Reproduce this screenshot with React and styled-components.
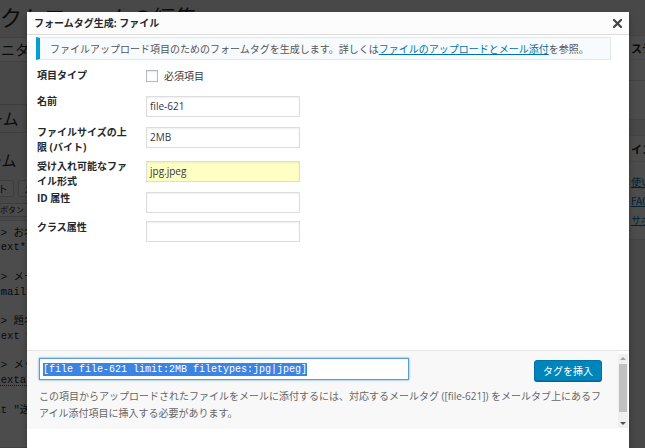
import React from "react";
import styled, { createGlobalStyle } from "styled-components";

const GlobalStyle = createGlobalStyle`
  html, body { margin: 0; padding: 0; background: #f1f1f1; }
  body { font-family: "Open Sans", "Noto Sans CJK JP", sans-serif; }
  * { box-sizing: border-box; }
`;

/* ---------- background admin page ---------- */
const Screen = styled.div`
  position: relative;
  width: 645px;
  height: 448px;
  overflow: hidden;
  background: #f1f1f1;
`;

const Admin = styled.div`
  display: flex;
  height: 100%;
  color: #23282d;
  font-family: "Noto Sans CJK JP", sans-serif;
`;

const MainCol = styled.div`
  flex: 1;
  min-width: 0;
  display: flex;
  flex-direction: column;
`;

const BgTitle = styled.h1`
  margin: 5px 0 0 -66px;
  font-size: 22px;
  line-height: 22px;
  font-weight: 400;
  white-space: nowrap;
`;

const TitleField = styled.div`
  margin: 10px 0 0 -20px;
  height: 25px;
  width: 560px;
  background: #fff;
  border: 1px solid #ddd;
  font-size: 14px;
  line-height: 23px;
  padding-left: 6px;
  white-space: nowrap;
`;

const TabRow = styled.div`
  margin-top: 43px;
  height: 28px;
  border-bottom: 1px solid #ccc;
  display: flex;
  align-items: flex-end;
`;

const Tab = styled.div`
  margin-left: ${(p) => p.$shift}px;
  height: 28px;
  padding: 0 7px 0 4px;
  border: 1px solid #ccc;
  border-bottom: none;
  background: ${(p) => (p.$active ? "#f1f1f1" : "#e4e4e4")};
  font-size: 16px;
  line-height: 26px;
  white-space: nowrap;
`;

const SectionHeading = styled.h2`
  margin: 18px 0 0 -43px;
  font-size: 15px;
  line-height: 18px;
  font-weight: 400;
  white-space: nowrap;
`;

const QuickRow = styled.div`
  margin-top: ${(p) => p.$mt}px;
  display: flex;
  gap: 4px;
  margin-left: ${(p) => p.$shift}px;
`;

const QuickBtn = styled.div`
  height: ${(p) => p.$h}px;
  padding: 0 5px;
  border: 1px solid #ccc;
  border-radius: 2px;
  background: #f7f7f7;
  font-size: ${(p) => p.$fs}px;
  line-height: ${(p) => p.$h - 2}px;
  white-space: nowrap;
`;

const CodeArea = styled.div`
  margin: 3px 0 0 -60px;
  padding: 4.6px 0 0 22px;
  background: #fff;
  border: 1px solid #ddd;
  flex: 1;
  font-family: "Liberation Mono", "Noto Sans CJK JP", monospace;
  font-size: 10.5px;
  line-height: 14.75px;
  white-space: pre;
`;

const Squiggle = styled.span`
  text-decoration: underline dotted #d00;
  text-underline-offset: 2px;
`;

const SideCol = styled.div`
  flex: none;
  width: 40px;
  padding-top: 35px;
  overflow: hidden;
`;

const SideBox = styled.div`
  margin-top: ${(p) => p.$mt}px;
  width: 280px;
  background: #fff;
  border: 1px solid #e5e5e5;
`;

const SideHead = styled.div`
  height: ${(p) => p.$h}px;
  line-height: ${(p) => p.$h}px;
  padding-left: 25px;
  font-size: 11px;
  font-weight: 700;
  border-bottom: 1px solid #eee;
  white-space: nowrap;
`;

const SideRow = styled.div`
  height: ${(p) => p.$h}px;
  border-bottom: ${(p) => (p.$line ? "1px solid #ddd" : "none")};
`;

const SideLinks = styled.div`
  padding: 10px 0 10px 25px;
  display: flex;
  flex-direction: column;
`;

const SideLink = styled.a`
  font-size: 10px;
  line-height: 19px;
  color: #0073aa;
  text-decoration: underline;
  white-space: nowrap;
`;

const Overlay = styled.div`
  position: absolute;
  inset: 0;
  background: rgba(0, 0, 0, 0.7);
`;

/* ---------- modal ---------- */
const Modal = styled.div`
  position: absolute;
  left: 27px;
  top: 12px;
  width: 602px;
  height: 460px;
  background: #fff;
  box-shadow: 0 3px 6px rgba(0, 0, 0, 0.3);
  display: flex;
  flex-direction: column;
  font-family: "Open Sans", "Noto Sans CJK JP", sans-serif;
  color: #23282d;
`;

const Header = styled.div`
  flex: none;
  height: 23px;
  display: flex;
  align-items: center;
  justify-content: space-between;
  padding: 0 7px;
  background: #fcfcfc;
  border-bottom: 1px solid #ddd;
`;

const Title = styled.div`
  font-size: 10px;
  font-weight: 700;
  line-height: 14px;
  color: #23282d;
`;

const CloseBtn = styled.div`
  width: 9px;
  height: 9px;
  display: flex;
  svg { display: block; }
`;

const Body = styled.div`
  flex: 1;
  padding: 2px 18px 0 9px;
  display: flex;
  flex-direction: column;
`;

const Notice = styled.div`
  height: 23px;
  display: flex;
  align-items: center;
  padding-left: 10px;
  background: #f7fbfd;
  border: 1px solid #e1e8ec;
  border-left: 4px solid #00a0d2;
  font-size: 10px;
  color: #555;
  white-space: nowrap;
`;

const Link = styled.a`
  color: #0073aa;
  text-decoration: underline;
`;

const FormTable = styled.div`
  margin-top: 8px;
  padding-left: 1px;
  display: flex;
  flex-direction: column;
`;

const Row = styled.div`
  height: ${(p) => p.$h}px;
  display: grid;
  grid-template-columns: 109px 154px;
  align-items: start;
`;

const Label = styled.div`
  max-width: 95px;
  padding-top: ${(p) => p.$pt}px;
  font-size: 10px;
  font-weight: 700;
  line-height: 15px;
  color: #23282d;
`;

const Field = styled.div`
  margin-top: 4px;
  height: 21px;
  width: 154px;
  border: 1px solid #ddd;
  box-shadow: inset 0 1px 2px rgba(0, 0, 0, 0.07);
  background: ${(p) => (p.$hl ? "#ffffc4" : "#fff")};
  font-size: 10px;
  line-height: 19px;
  padding: 0 3px;
  color: #32373c;
`;

const CheckLine = styled.label`
  display: flex;
  align-items: center;
  gap: 6px;
  margin-top: 1px;
  font-size: 10px;
  line-height: 14px;
  color: #32373c;
`;

const Check = styled.span`
  width: 12px;
  height: 12px;
  border: 1px solid #b4b9be;
  background: #fff;
  box-shadow: inset 0 1px 2px rgba(0, 0, 0, 0.1);
`;

const InsertBox = styled.div`
  flex: none;
  height: 79px;
  display: flex;
  border-top: 1px solid #e5e5e5;
`;

const InsertMain = styled.div`
  flex: 1;
  background: #f8f8f8;
  padding: 7px 16px 0 12px;
  display: flex;
  flex-direction: column;
`;

const TopLine = styled.div`
  display: flex;
  justify-content: space-between;
  align-items: flex-start;
`;

const TagField = styled.div`
  width: 370px;
  height: 22px;
  background: #fff;
  border: 1px solid #5b9dd9;
  box-shadow: 0 0 2px rgba(30, 140, 190, 0.8);
  display: flex;
  align-items: center;
  padding-left: 3px;
`;

const Selected = styled.span`
  background: #3b84e3;
  color: #fff;
  font-family: "Liberation Mono", monospace;
  font-size: 10px;
  line-height: 13px;
  white-space: pre;
`;

const InsertButton = styled.button`
  margin-top: 2px;
  height: 21px;
  padding: 0 8px;
  background: #0085ba;
  border: 1px solid #0073aa;
  border-radius: 3px;
  box-shadow: 0 1px 0 #006799;
  color: #fff;
  font-family: "Noto Sans CJK JP", sans-serif;
  font-size: 10px;
  line-height: 19px;
`;

const Desc = styled.p`
  margin: 7px 0 0;
  font-size: 10px;
  line-height: 16.5px;
  color: #666;
  white-space: nowrap;
`;

const ScrollBar = styled.div`
  flex: none;
  width: 10px;
  margin: 3px 1px 1px 0;
  background: #f0f0f0;
  display: flex;
  flex-direction: column;
  align-items: center;
`;

const Arrow = styled.div`
  height: 9px;
  display: flex;
  align-items: center;
  justify-content: center;
  &::after {
    content: "";
    border-left: 3px solid transparent;
    border-right: 3px solid transparent;
    ${(p) =>
      p.$up
        ? "border-bottom: 3px solid #a3a3a3;"
        : "border-top: 3px solid #505050;"}
  }
`;

const Thumb = styled.div`
  width: 8px;
  height: 48px;
  margin-top: 1px;
  background: #c1c1c1;
`;

const Spacer = styled.div`
  flex: 1;
`;

const Footer = styled.div`
  flex: none;
  height: 43px;
`;

export default function App() {
  return (
    <>
      <GlobalStyle />
      <Screen>
        <Admin>
          <MainCol>
            <BgTitle>コンタクトフォームの編集</BgTitle>
            <TitleField>モニター応募フォーム</TitleField>
            <TabRow>
              <Tab $shift={-50} $active>フォーム</Tab>
              <Tab $shift={0}>メール</Tab>
            </TabRow>
            <SectionHeading>フォーム</SectionHeading>
            <QuickRow $mt={11} $shift={-38}>
              <QuickBtn $h={17} $fs={10}>テキスト</QuickBtn>
              <QuickBtn $h={17} $fs={10}>メールアドレス</QuickBtn>
            </QuickRow>
            <QuickRow $mt={6} $shift={-22}>
              <QuickBtn $h={14} $fs={8}>送信ボタン</QuickBtn>
            </QuickRow>
            <CodeArea>
              {"<label> お名前 (必須)\n    [text* your-name] </label>\n\n<label> メールアドレス (必須)\n    [email* your-email] </label>\n\n<label> 題名\n    [text your-subject] </label>\n\n<label> メッセージ本文\n    [t"}
              <Squiggle>extarea</Squiggle>
              {" your-message] </label>\n\n[submit \"送信\"]"}
            </CodeArea>
          </MainCol>
          <SideCol>
            <SideBox $mt={0}>
              <SideHead $h={24}>ステータス</SideHead>
              <SideRow $h={21} $line />
              <SideRow $h={38} />
            </SideBox>
            <SideBox $mt={15}>
              <SideHead $h={26}>インフォメーション</SideHead>
              <SideLinks>
                <SideLink>使い方</SideLink>
                <SideLink>FAQ</SideLink>
                <SideLink>サポート</SideLink>
              </SideLinks>
            </SideBox>
          </SideCol>
        </Admin>
        <Overlay />
        <Modal>
          <Header>
            <Title>フォームタグ生成: ファイル</Title>
            <CloseBtn>
              <svg width="9" height="9" viewBox="0 0 9 9">
                <path d="M1 1 L8 8 M8 1 L1 8" stroke="#444" strokeWidth="2.2" strokeLinecap="square" />
              </svg>
            </CloseBtn>
          </Header>
          <Body>
            <Notice>
              ファイルアップロード項目のためのフォームタグを生成します。詳しくは
              <Link>ファイルのアップロードとメール添付</Link>を参照。
            </Notice>
            <FormTable>
              <Row $h={24}>
                <Label $pt={0}>項目タイプ</Label>
                <CheckLine>
                  <Check />
                  必須項目
                </CheckLine>
              </Row>
              <Row $h={31}>
                <Label $pt={2}>名前</Label>
                <Field>file-621</Field>
              </Row>
              <Row $h={34}>
                <Label $pt={2}>ファイルサイズの上限 (バイト)</Label>
                <Field>2MB</Field>
              </Row>
              <Row $h={31}>
                <Label $pt={2}>受け入れ可能なファイル形式</Label>
                <Field $hl>jpg.jpeg</Field>
              </Row>
              <Row $h={29}>
                <Label $pt={3}>ID 属性</Label>
                <Field />
              </Row>
              <Row $h={29}>
                <Label $pt={3}>クラス属性</Label>
                <Field />
              </Row>
            </FormTable>
          </Body>
          <InsertBox>
            <InsertMain>
              <TopLine>
                <TagField>
                  <Selected>[file file-621 limit:2MB filetypes:jpg|jpeg]</Selected>
                </TagField>
                <InsertButton>タグを挿入</InsertButton>
              </TopLine>
              <Desc>
                この項目からアップロードされたファイルをメールに添付するには、対応するメールタグ ([file-621]) をメールタブ上にあるフ
                <br />
                アイル添付項目に挿入する必要があります。
              </Desc>
            </InsertMain>
            <ScrollBar>
              <Arrow $up />
              <Thumb />
              <Spacer />
              <Arrow />
            </ScrollBar>
          </InsertBox>
          <Footer />
        </Modal>
      </Screen>
    </>
  );
}
